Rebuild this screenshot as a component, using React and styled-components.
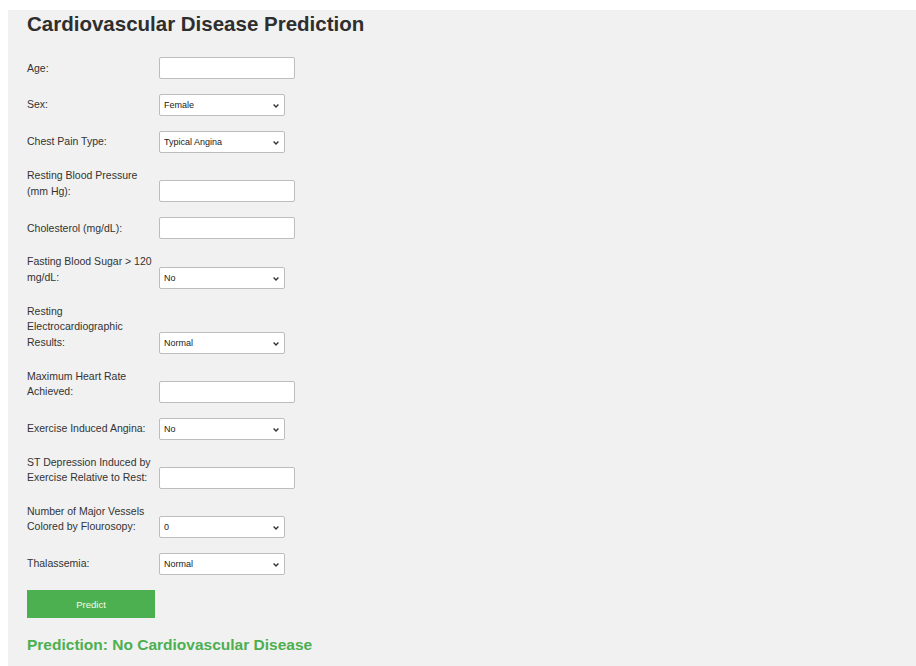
import React from "react";
import styled, { createGlobalStyle } from "styled-components";

const GlobalStyle = createGlobalStyle`
  html, body {
    margin: 0;
    background: #ffffff;
  }

  body {
    padding: 10px 0 0 8px;
    font-family: "Liberation Sans", Arial, sans-serif;
    color: #333333;
  }
`;

const Page = styled.div`
  background: #f1f1f1;
  min-height: calc(100vh - 10px);
  padding: 0 19px;
  box-sizing: border-box;
`;

const Title = styled.h1`
  margin: 0 0 20px;
  font-size: 20.5px;
  font-weight: bold;
  line-height: 27px;
  color: #2e2e2e;
`;

const Form = styled.form`
  display: flex;
  flex-direction: column;
  gap: 15px;
`;

const Row = styled.div`
  display: flex;
  align-items: last baseline;
`;

const Label = styled.label`
  width: 132px;
  flex: none;
  padding-right: 2px;
  box-sizing: border-box;
  font-size: 10.5px;
  line-height: 15.5px;
  color: #333333;
`;

const TextInput = styled.input`
  width: 136px;
  height: 22px;
  box-sizing: border-box;
  padding: 2px 4px;
  border: 1px solid #bdbdbd;
  border-radius: 2px;
  background: #ffffff;
  font-family: inherit;
  font-size: 10px;
`;

const SelectWrap = styled.div`
  position: relative;
  display: inline-block;
  width: 126px;
`;

const Select = styled.select`
  appearance: none;
  width: 100%;
  height: 22px;
  box-sizing: border-box;
  padding: 0 4px;
  border: 1px solid #bdbdbd;
  border-radius: 2px;
  background: #ffffff;
  color: #222222;
  font-family: inherit;
  font-size: 9px;
`;

const Chevron = styled.svg`
  position: absolute;
  right: 6px;
  top: 50%;
  width: 6px;
  height: 4px;
  margin-top: -1px;
  pointer-events: none;
`;

const PredictButton = styled.button`
  width: 128px;
  height: 28px;
  border: none;
  background: #4caf50;
  color: #f4fbe9;
  font-family: inherit;
  font-size: 9.5px;
  cursor: pointer;
`;

const Result = styled.h2`
  margin: 17px 0 0;
  font-size: 15.5px;
  line-height: 20px;
  font-weight: bold;
  color: #4caf50;
`;

const fields = [
  { label: "Age:", type: "text" },
  { label: "Sex:", options: ["Female", "Male"] },
  {
    label: "Chest Pain Type:",
    options: ["Typical Angina", "Atypical Angina", "Non-anginal Pain", "Asymptomatic"],
  },
  { label: "Resting Blood Pressure (mm Hg):", type: "text" },
  { label: "Cholesterol (mg/dL):", type: "text" },
  { label: "Fasting Blood Sugar > 120 mg/dL:", options: ["No", "Yes"] },
  {
    label: "Resting Electrocardiographic Results:",
    options: ["Normal", "ST-T Wave Abnormality", "Left Ventricular Hypertrophy"],
  },
  { label: "Maximum Heart Rate Achieved:", type: "text" },
  { label: "Exercise Induced Angina:", options: ["No", "Yes"] },
  { label: "ST Depression Induced by Exercise Relative to Rest:", type: "text" },
  { label: "Number of Major Vessels Colored by Flourosopy:", options: ["0", "1", "2", "3"] },
  { label: "Thalassemia:", options: ["Normal", "Fixed Defect", "Reversible Defect"] },
];

function Dropdown({ id, options }) {
  return (
    <SelectWrap>
      <Select id={id} defaultValue={options[0]}>
        {options.map((o) => (
          <option key={o}>{o}</option>
        ))}
      </Select>
      <Chevron viewBox="0 0 6 4">
        <path d="M0.6 0.6 L3 3 L5.4 0.6" fill="none" stroke="#333" strokeWidth="1.4" />
      </Chevron>
    </SelectWrap>
  );
}

export default function App() {
  return (
    <>
      <GlobalStyle />
      <Page>
        <Title>Cardiovascular Disease Prediction</Title>
        <Form onSubmit={(e) => e.preventDefault()}>
          {fields.map((f, i) => (
            <Row key={i}>
              <Label htmlFor={`field-${i}`}>{f.label}</Label>
              {f.options ? (
                <Dropdown id={`field-${i}`} options={f.options} />
              ) : (
                <TextInput id={`field-${i}`} type={f.type} />
              )}
            </Row>
          ))}
          <Row>
            <PredictButton type="submit">Predict</PredictButton>
          </Row>
        </Form>
        <Result>Prediction: No Cardiovascular Disease</Result>
      </Page>
    </>
  );
}
